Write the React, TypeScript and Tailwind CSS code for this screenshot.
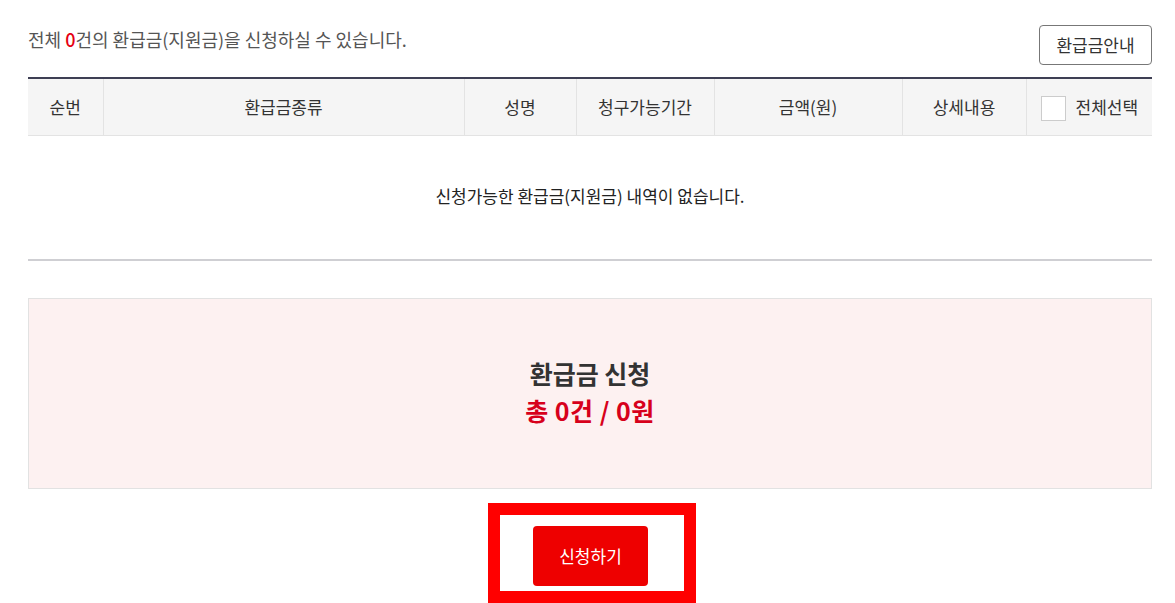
export default function App() {
  const cols = [
    { label: '순번', w: 'w-[75px]' },
    { label: '환급금종류', w: 'w-[361px]' },
    { label: '성명', w: 'w-[112px]' },
    { label: '청구가능기간', w: 'w-[138px]' },
    { label: '금액(원)', w: 'w-[188px]' },
    { label: '상세내용', w: 'w-[124px]' },
  ];

  return (
    <div className="min-h-[603px] bg-white pl-[28px] pr-[23px] font-['Noto_Sans_CJK_KR','Noto_Sans',sans-serif] text-[#333]">
      {/* summary line */}
      <div className="flex items-end justify-between pt-[25px]">
        <p className="mb-[13px] text-[18px] leading-[26px] text-[#555]">
          전체 <span className="font-medium text-[#e60012]">0</span>건의 환급금(지원금)을 신청하실 수 있습니다.
        </p>
        <button className="h-[40px] w-[113px] rounded-[4px] border border-[#777] bg-white text-[17px] text-[#333]">
          환급금안내
        </button>
      </div>

      {/* table */}
      <table className="mt-[12px] w-full table-fixed border-collapse border-t-[2px] border-t-[#3e3f54]">
        <thead>
          <tr className="h-[57px] border-b border-[#e3e3e3] bg-[#f5f5f5]">
            {cols.map((c, i) => (
              <th
                key={c.label}
                className={`${c.w} ${i > 0 ? 'border-l border-[#e3e3e3]' : ''} text-[17px] font-normal text-[#333]`}
              >
                {c.label}
              </th>
            ))}
            <th className="border-l border-[#e3e3e3] font-normal">
              <label className="flex items-center pl-[14px] text-[17px] text-[#333]">
                <span className="mr-[10px] mt-[3px] inline-block h-[25px] w-[25px] border border-[#ccc] bg-white" />
                전체선택
              </label>
            </th>
          </tr>
        </thead>
        <tbody>
          <tr className="h-[125px] border-b-[2px] border-[#cfcfd3]">
            <td colSpan={7} className="pb-[3px] text-center text-[17px] text-[#222]">
              신청가능한 환급금(지원금) 내역이 없습니다.
            </td>
          </tr>
        </tbody>
      </table>

      {/* totals box */}
      <div className="mt-[37px] flex h-[191px] flex-col items-center justify-center border border-[#e2e2e2] bg-[#fdf1f1] pb-[4px]">
        <h2 className="text-[25px] font-bold leading-[37px] text-[#333]">환급금 신청</h2>
        <p className="text-[25px] font-bold leading-[37px] tracking-[0.5px] text-[#d7001b]">총 0건 / 0원</p>
      </div>

      {/* submit */}
      <div className="mt-[14px] flex justify-center">
        <div className="ml-[4px] flex h-[100px] w-[208px] justify-center border-[12px] border-[#ff0000] pt-[11px]">
          <button className="mr-[3px] h-[60px] w-[115px] rounded-[4px] bg-[#ee0000] text-[17px] text-white">
            신청하기
          </button>
        </div>
      </div>
    </div>
  );
}
